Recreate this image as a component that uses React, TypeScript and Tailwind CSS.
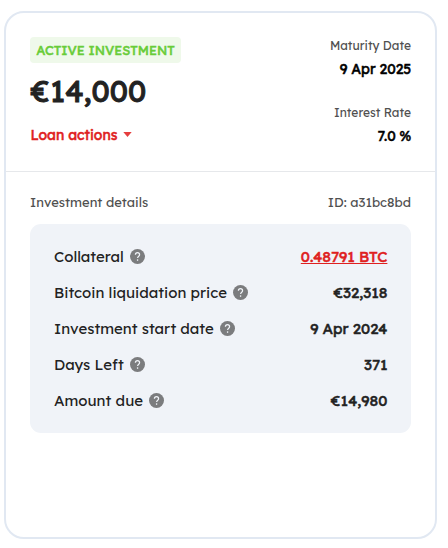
import React from "react";

function HelpIcon() {
  return (
    <svg className="mb-px ml-1.5 h-[15px] w-[15px] shrink-0" viewBox="0 0 15 15" fill="none">
      <circle cx="7.5" cy="7.5" r="7.5" fill="#7b7c7e" />
      <path
        d="M5.4 5.8C5.4 4.4 6.3 3.6 7.5 3.6S9.6 4.5 9.6 5.7C9.6 7.2 7.6 7.3 7.6 9.1"
        stroke="#f1f4f9"
        strokeWidth="1.2"
      />
      <circle cx="7.6" cy="11.1" r="0.8" fill="#f1f4f9" />
    </svg>
  );
}

const rows = [
  { label: "Collateral", value: "0.48791 BTC", valueClass: "text-[#df2020] underline" },
  { label: "Bitcoin liquidation price", value: "€32,318", valueClass: "" },
  { label: "Investment start date", value: "9 Apr 2024", valueClass: "" },
  { label: "Days Left", value: "371", valueClass: "" },
  { label: "Amount due", value: "€14,980", valueClass: "" },
];

export default function App() {
  return (
    <div className="h-[548px] w-[448px] bg-white pl-1 pt-[11px] font-['Lexend','Inter',sans-serif] text-[#222]">
      <div className="h-[528px] w-[433px] rounded-[20px] border-2 border-[#e1e8f2] bg-white">
        <header className="flex h-[159px] justify-between border-b border-[#e6e8eb] px-6 pt-6">
          <div className="flex flex-col items-start whitespace-nowrap">
            <div className="flex h-[26px] w-[151px] items-center justify-center rounded bg-[#eff9ea] pt-px text-[13px] text-[#68cc38] [-webkit-text-stroke:0.5px]">
              <span>ACTIVE INVESTMENT</span>
            </div>
            <div className="ml-[0.5px] mt-2 text-[30px] leading-10 [-webkit-text-stroke:1px]">
              <span>€14,000</span>
            </div>
            <button className="ml-[0.4px] mt-[14px] flex items-center text-[14px] leading-5 text-[#df2020] [-webkit-text-stroke:0.5px]">
              <span>Loan actions</span>
              <svg className="mb-px ml-1.5 h-[5px] w-[9px]" viewBox="0 0 9 5">
                <path d="M.3 0h8.4L4.5 5z" fill="#e53e3e" />
              </svg>
            </button>
          </div>
          <div className="flex flex-col items-end whitespace-nowrap">
            <span className="text-[12px] leading-[18px] text-[#505050]">Maturity Date</span>
            <span className="-mr-[0.3px] mt-1 text-[14px] leading-5 text-black [-webkit-text-stroke:0.5px]">9 Apr 2025</span>
            <span className="mt-[25px] text-[12px] leading-[18px] text-[#505050]">Interest Rate</span>
            <span className="-mr-[0.3px] mt-1 text-[14px] leading-5 text-black [-webkit-text-stroke:0.5px]">7.0 %</span>
          </div>
        </header>
        <section className="px-6 pt-[21px]">
          <div className="flex h-5 items-center justify-between text-[13px] text-[#505050]">
            <span>Investment details</span>
            <span>ID: a31bc8bd</span>
          </div>
          <div className="mt-[11px] h-[209px] rounded-[11px] bg-[#f0f3f8] px-6 pt-[15px]">
            {rows.map((row) => (
              <div key={row.label} className="flex h-9 items-center justify-between whitespace-nowrap text-[15px]">
                <div className="flex items-center">
                  <span>{row.label}</span>
                  <HelpIcon />
                </div>
                <span className={`-mr-[0.4px] [-webkit-text-stroke:0.5px] ${row.valueClass}`}>{row.value}</span>
              </div>
            ))}
          </div>
        </section>
      </div>
    </div>
  );
}
